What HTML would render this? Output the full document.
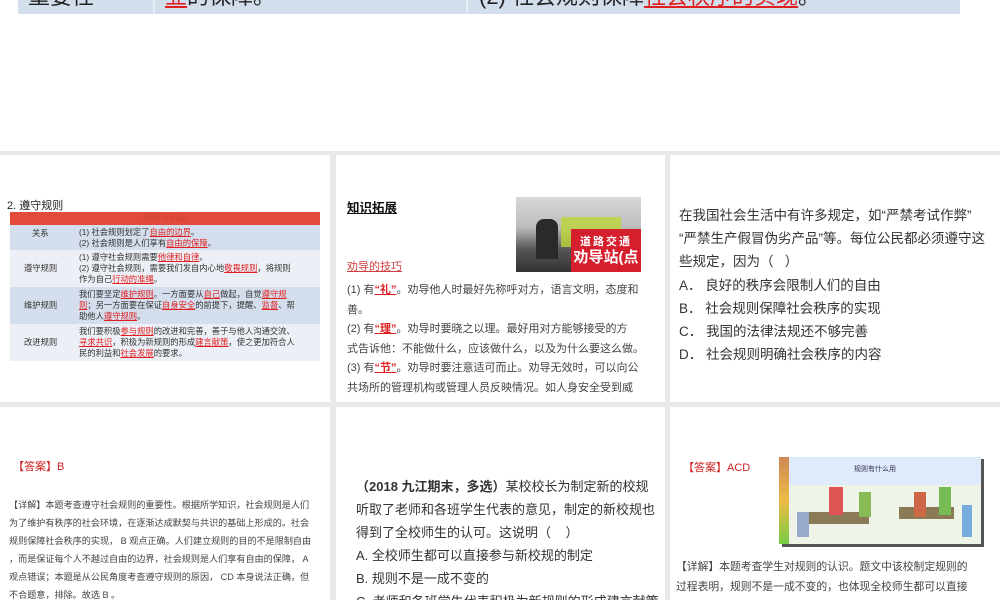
<!DOCTYPE html>
<html><head><meta charset="utf-8"><style>
*{margin:0;padding:0;box-sizing:border-box}
html,body{width:1000px;height:600px;overflow:hidden}
body{background:#fff;position:relative;font-family:"Liberation Sans","Noto Sans CJK SC",sans-serif;color:#333}
.a{position:absolute}
.p{position:absolute;background:#fff;overflow:hidden}
.u{color:#e02020;text-decoration:underline}
.nw{white-space:nowrap}
</style></head><body>
<div class="a" style="left:18px;top:0;width:942px;height:14px;background:#d3deed;overflow:hidden">
 <div class="a" style="left:135px;top:0;width:2px;height:14px;background:#e6edf6"></div>
 <div class="a" style="left:448px;top:0;width:2px;height:14px;background:#e6edf6"></div>
 <div class="a nw" style="left:10px;top:-21px;font-size:22px;color:#222">重要性</div>
 <div class="a nw" style="left:147px;top:-21px;font-size:22px;color:#222"><span class="u">业</span>的保障。</div>
 <div class="a nw" style="left:461px;top:-21px;font-size:22px;color:#222">(2) 社会规则保障<span class="u">社会秩序的实现</span>。</div>
</div>
<div class="a" style="left:0;top:151px;width:1000px;height:449px;background:#e9e9e9"></div>

<div class="p" style="left:0;top:155px;width:330px;height:247px">
 <div class="a" style="left:7px;top:42px;font-size:11px;color:#222">2. 遵守规则</div>
 <div class="a" style="left:10px;top:57px;width:310px;height:13px;background:#e34a3a;color:#c9463a;font-size:9px;text-align:center;line-height:13px">规则与自由</div>
 <div class="a nw" style="left:10px;top:70px;width:310px;font-size:8.3px;line-height:11px;color:#333">
  <div style="background:#d5deec;height:25px;position:relative"><span class="a" style="left:22px;top:3px">关系</span><span class="a" style="left:69px;top:2px">(1) 社会规则划定了<span class="u">自由的边界</span>。<br>(2) 社会规则是人们享有<span class="u">自由的保障</span>。</span></div>
  <div style="background:#eceff6;height:37px;position:relative"><span class="a" style="left:14px;top:13px">遵守规则</span><span class="a" style="left:69px;top:2px">(1) 遵守社会规则需要<span class="u">他律和自律</span>。<br>(2) 遵守社会规则，需要我们发自内心地<span class="u">敬畏规则</span>，将规则<br>作为自己<span class="u">行动的准绳</span>。</span></div>
  <div style="background:#d5deec;height:37px;position:relative"><span class="a" style="left:14px;top:13px">维护规则</span><span class="a" style="left:69px;top:2px">我们要坚定<span class="u">维护规则</span>。一方面要从<span class="u">自己</span>做起，自觉<span class="u">遵守规</span><br><span class="u">则</span>；另一方面要在保证<span class="u">自身安全</span>的前提下，提醒、<span class="u">监督</span>、帮<br>助他人<span class="u">遵守规则</span>。</span></div>
  <div style="background:#eceff6;height:37px;position:relative"><span class="a" style="left:14px;top:13px">改进规则</span><span class="a" style="left:69px;top:2px">我们要积极<span class="u">参与规则</span>的改进和完善，善于与他人沟通交流、<br><span class="u">寻求共识</span>，积极为新规则的形成<span class="u">建言献策</span>，使之更加符合人<br>民的利益和<span class="u">社会发展</span>的要求。</span></div>
 </div>
</div>

<div class="p" style="left:336px;top:155px;width:329px;height:247px">
 <div class="a" style="left:11px;top:42px;font-size:12.5px;font-weight:bold;color:#111;text-decoration:underline">知识拓展</div>
 <div class="a" style="left:180px;top:42px;width:125px;height:75px;background:linear-gradient(180deg,#d8d8d8 0%,#bdbdbd 40%,#555 70%,#333 100%)">
  <div class="a" style="left:20px;top:22px;width:22px;height:40px;background:#2a2a2a;border-radius:8px 8px 0 0"></div>
  <div class="a" style="left:45px;top:20px;width:60px;height:30px;background:#bcd43a;opacity:.8"></div>
  <div class="a" style="left:55px;top:32px;width:70px;height:43px;background:#d51f2c;color:#fff;font-weight:bold;text-align:center">
   <div style="font-size:11px;margin-top:4px;letter-spacing:2px">道路交通</div>
   <div style="font-size:15px;line-height:18px">劝导站(点</div>
  </div>
 </div>
 <div class="a" style="left:11px;top:103px;font-size:11px;color:#d04040;text-decoration:underline">劝导的技巧</div>
 <div class="a nw" style="left:11px;top:126px;font-size:11px;line-height:19.5px;color:#444">(1) 有<span class="u"><b>“礼”</b></span>。劝导他人时最好先称呼对方，语言文明，态度和<br>善。<br>(2) 有<span class="u"><b>“理”</b></span>。劝导时要晓之以理。最好用对方能够接受的方<br>式告诉他：不能做什么，应该做什么，以及为什么要这么做。<br>(3) 有<span class="u"><b>“节”</b></span>。劝导时要注意适可而止。劝导无效时，可以向公<br>共场所的管理机构或管理人员反映情况。如人身安全受到威</div>
</div>

<div class="p" style="left:670px;top:155px;width:330px;height:247px">
 <div class="a nw" style="left:9px;top:49px;font-size:13.5px;line-height:23.2px;color:#333">在我国社会生活中有许多规定，如“严禁考试作弊”<br>“严禁生产假冒伪劣产品”等。每位公民都必须遵守这<br>些规定，因为（&nbsp;&nbsp;&nbsp;）<br>A．&nbsp;良好的秩序会限制人们的自由<br>B．&nbsp;社会规则保障社会秩序的实现<br>C．&nbsp;我国的法律法规还不够完善<br>D．&nbsp;社会规则明确社会秩序的内容</div>
</div>

<div class="p" style="left:0;top:407px;width:330px;height:193px">
 <div class="a" style="left:13px;top:51px;font-size:11px;color:#d02020">【答案】B</div>
 <div class="a nw" style="left:9px;top:89px;font-size:9.1px;line-height:18px;color:#444">【详解】本题考查遵守社会规则的重要性。根据所学知识，社会规则是人们<br>为了维护有秩序的社会环境，在逐渐达成默契与共识的基础上形成的。社会<br>规则保障社会秩序的实现， B 观点正确。人们建立规则的目的不是限制自由<br>，而是保证每个人不越过自由的边界，社会规则是人们享有自由的保障， A<br>观点错误；本题是从公民角度考查遵守规则的原因， CD 本身说法正确，但<br>不合题意，排除。故选 B 。</div>
</div>

<div class="p" style="left:336px;top:407px;width:329px;height:193px">
 <div class="a nw" style="left:20px;top:68px;font-size:13px;line-height:23px;color:#333"><b>（2018 九江期末，多选）</b>某校校长为制定新的校规<br>听取了老师和各班学生代表的意见，制定的新校规也<br>得到了全校师生的认可。这说明（&nbsp;&nbsp;&nbsp;&nbsp;）<br>A. 全校师生都可以直接参与新校规的制定<br>B. 规则不是一成不变的<br>C. 老师和各班学生代表积极为新规则的形成建言献策</div>
</div>

<div class="p" style="left:670px;top:407px;width:330px;height:193px">
 <div class="a" style="left:13px;top:52px;font-size:11px;color:#d02020">【答案】ACD</div>
 <div class="a" style="left:112px;top:52px;width:202px;height:88px;background:#555"></div>
 <div class="a" style="left:109px;top:50px;width:202px;height:87px;background:#eef5e8;overflow:hidden">
  <div class="a" style="left:0;top:0;width:202px;height:28px;background:#dfeafa"></div>
  <div class="a" style="left:0;top:0;width:10px;height:87px;background:linear-gradient(#c85,#eb4,#7c4)"></div>
  <div class="a" style="left:75px;top:7px;font-size:7px;color:#335">规则有什么用</div>
  <div class="a" style="left:30px;top:55px;width:60px;height:12px;background:#8a7a55"></div>
  <div class="a" style="left:120px;top:50px;width:55px;height:12px;background:#8a7a55"></div>
  <div class="a" style="left:50px;top:30px;width:14px;height:28px;background:#d55"></div>
  <div class="a" style="left:80px;top:35px;width:12px;height:25px;background:#8b5"></div>
  <div class="a" style="left:135px;top:35px;width:12px;height:25px;background:#c64"></div>
  <div class="a" style="left:160px;top:30px;width:12px;height:28px;background:#7b5"></div>
  <div class="a" style="left:183px;top:48px;width:10px;height:32px;background:#7ad"></div>
  <div class="a" style="left:18px;top:55px;width:12px;height:25px;background:#9ac"></div>
 </div>
 <div class="a nw" style="left:6px;top:150px;font-size:10.8px;line-height:20px;color:#444">【详解】本题考查学生对规则的认识。题文中该校制定规则的<br>过程表明，规则不是一成不变的，也体现全校师生都可以直接<br>参与新校规的制定，老师和各班学生代表积极为新规则建言</div>
</div>
</body></html>
